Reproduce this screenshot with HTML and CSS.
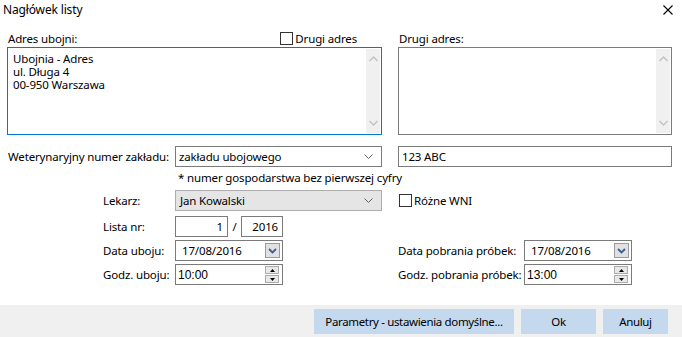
FILE: index.html
```html
<!DOCTYPE html>
<html lang="pl">
<head>
  <meta charset="UTF-8">
  <title>Nagłówek listy</title>
  <link rel="stylesheet" href="styles.css">
</head>
<body>
  <div class="dialog">
    <div class="titlebar">
      <span class="title">Nagłówek listy</span>
      <svg class="close" width="10" height="10" viewBox="0 0 10 10">
        <path d="M0.5 0.5 L9.5 9.5 M9.5 0.5 L0.5 9.5" stroke="#000" stroke-width="1.1" fill="none"/>
      </svg>
    </div>

    <div class="addresses">
      <div class="addr-col addr-main">
        <div class="addr-head">
          <span>Adres ubojni:</span>
          <span class="check-item"><span class="check"></span>Drugi adres</span>
        </div>
        <div class="memo focused">
          <div class="memo-text">
            <div>Ubojnia - Adres</div>
            <div>ul. Długa 4</div>
            <div>00-950 Warszawa</div>
          </div>
          <div class="vscroll">
            <svg width="9" height="6" viewBox="0 0 9 6"><path d="M0.5 5 L4.5 1 L8.5 5" stroke="#c2c2c2" stroke-width="1.4" fill="none"/></svg>
            <svg width="9" height="6" viewBox="0 0 9 6"><path d="M0.5 1 L4.5 5 L8.5 1" stroke="#c2c2c2" stroke-width="1.4" fill="none"/></svg>
          </div>
        </div>
      </div>
      <div class="addr-col addr-second">
        <div class="addr-head">
          <span>Drugi adres:</span>
        </div>
        <div class="memo">
          <div class="memo-text"></div>
          <div class="vscroll">
            <svg width="9" height="6" viewBox="0 0 9 6"><path d="M0.5 5 L4.5 1 L8.5 5" stroke="#c2c2c2" stroke-width="1.4" fill="none"/></svg>
            <svg width="9" height="6" viewBox="0 0 9 6"><path d="M0.5 1 L4.5 5 L8.5 1" stroke="#c2c2c2" stroke-width="1.4" fill="none"/></svg>
          </div>
        </div>
      </div>
    </div>

    <div class="form">
      <div class="row row-wni">
        <span class="lbl lbl-wide">Weterynaryjny numer zakładu:</span>
        <div class="combo combo-wide">
          <span>zakładu ubojowego</span>
          <svg class="chev" width="9" height="5" viewBox="0 0 9 5"><path d="M0.5 0.5 L4.5 4.5 L8.5 0.5" stroke="#606060" stroke-width="1" fill="none"/></svg>
        </div>
        <div class="edit edit-wni">123 ABC</div>
      </div>

      <div class="note">* numer gospodarstwa bez pierwszej cyfry</div>

      <div class="row row-lekarz">
        <span class="lbl">Lekarz:</span>
        <div class="combo combo-wide readonly">
          <span>Jan Kowalski</span>
          <svg class="chev" width="9" height="5" viewBox="0 0 9 5"><path d="M0.5 0.5 L4.5 4.5 L8.5 0.5" stroke="#606060" stroke-width="1" fill="none"/></svg>
        </div>
        <span class="check-item check-wni"><span class="check"></span>Różne WNI</span>
      </div>

      <div class="row row-lista">
        <span class="lbl">Lista nr:</span>
        <div class="edit num num-a">1</div>
        <span class="slash">/</span>
        <div class="edit num num-b">2016</div>
      </div>

      <div class="row row-dates">
        <div class="pair">
          <span class="lbl">Data uboju:</span>
          <div class="picker">
            <span>17/08/2016</span>
            <span class="drop-btn">
              <svg width="9" height="6" viewBox="0 0 9 6"><path d="M1 1 L4.5 4.5 L8 1" stroke="#3a5f94" stroke-width="1.8" fill="none"/></svg>
            </span>
          </div>
        </div>
        <div class="pair pair-right">
          <span class="lbl lbl-right">Data pobrania próbek:</span>
          <div class="picker">
            <span>17/08/2016</span>
            <span class="drop-btn">
              <svg width="9" height="6" viewBox="0 0 9 6"><path d="M1 1 L4.5 4.5 L8 1" stroke="#3a5f94" stroke-width="1.8" fill="none"/></svg>
            </span>
          </div>
        </div>
      </div>

      <div class="row row-times">
        <div class="pair">
          <span class="lbl">Godz. uboju:</span>
          <div class="picker time">
            <span>10:00</span>
            <span class="spin">
              <span class="spin-btn"><svg width="5" height="3" viewBox="0 0 5 3"><path d="M0 3 L2.5 0 L5 3 Z" fill="#000"/></svg></span>
              <span class="spin-btn"><svg width="5" height="3" viewBox="0 0 5 3"><path d="M0 0 L2.5 3 L5 0 Z" fill="#000"/></svg></span>
            </span>
          </div>
        </div>
        <div class="pair pair-right">
          <span class="lbl lbl-right">Godz. pobrania próbek:</span>
          <div class="picker time">
            <span>13:00</span>
            <span class="spin">
              <span class="spin-btn"><svg width="5" height="3" viewBox="0 0 5 3"><path d="M0 3 L2.5 0 L5 3 Z" fill="#000"/></svg></span>
              <span class="spin-btn"><svg width="5" height="3" viewBox="0 0 5 3"><path d="M0 0 L2.5 3 L5 0 Z" fill="#000"/></svg></span>
            </span>
          </div>
        </div>
      </div>
    </div>

    <div class="footer">
      <button class="btn btn-params">Parametry - ustawienia domyślne...</button>
      <button class="btn btn-ok">Ok</button>
      <button class="btn btn-cancel">Anuluj</button>
    </div>
  </div>
</body>
</html>
```

FILE: styles.css
```css
* {
  box-sizing: border-box;
}

body {
  margin: 0;
  background-color: #ffffff;
  font-family: 'Noto Sans', 'Open Sans', sans-serif;
  font-size: 11.5px;
  letter-spacing: -0.15px;
  color: #000;
}

.dialog {
  width: 682px;
  height: 337px;
  display: flex;
  flex-direction: column;
  overflow: hidden;
}

.titlebar {
  height: 30px;
  display: flex;
  justify-content: space-between;
  align-items: flex-start;
  padding: 1px 9px 0 3px;
  line-height: 18px;
  font-size: 12px;
}

.close {
  margin-top: 4px;
}

/* address memos */
.addresses {
  display: flex;
  padding-left: 7px;
  gap: 16px;
}

.addr-main {
  width: 375px;
}

.addr-second {
  width: 274px;
}

.addr-head {
  height: 17px;
  display: flex;
  justify-content: space-between;
  align-items: center;
  padding: 0 25px 0 1px;
  line-height: 16px;
}

.check-item {
  display: flex;
  align-items: center;
  gap: 2px;
}

.check {
  width: 13px;
  height: 13px;
  border: 1px solid #333;
  background: #fff;
}

.memo {
  height: 88px;
  border: 1px solid #7a7a7a;
  display: flex;
  justify-content: space-between;
  padding: 1px 1px 1px 0;
}

.memo.focused {
  border-color: #0078d7;
}

.memo-text {
  padding: 3px 0 0 5px;
}

.memo-text div {
  height: 13px;
  line-height: 13px;
}

.vscroll {
  width: 14px;
  background: #f0f0f0;
  display: flex;
  flex-direction: column;
  justify-content: space-between;
  align-items: center;
  padding: 7px 0 7px;
}

/* form rows */
.form {
  padding-top: 11px;
}

.row {
  display: flex;
  align-items: center;
  height: 21px;
}

.lbl {
  width: 72px;
  margin-left: 103px;
  white-space: nowrap;
}

.lbl-wide {
  width: 167px;
  margin-left: 8px;
}

.combo {
  height: 21px;
  border: 1px solid #7a7a7a;
  display: flex;
  align-items: center;
  justify-content: space-between;
  padding: 0 8px 0 3px;
  background: #fff;
}

.combo-wide {
  width: 207px;
}

.combo.readonly {
  background: #e5e5e5;
  border-color: #adadad;
  padding-left: 4px;
}

.edit {
  height: 21px;
  border: 1px solid #7a7a7a;
  display: flex;
  align-items: center;
  padding: 0 3px;
}

.edit-wni {
  width: 274px;
  margin-left: 16px;
}

.note {
  height: 23px;
  padding: 3px 0 0 178px;
}

.check-wni {
  margin-left: 17px;
}

.row-lista {
  margin-top: 5px;
}

.num {
  justify-content: flex-end;
  padding-right: 4px;
}

.num-a {
  width: 53px;
}

.num-b {
  width: 42px;
}

.slash {
  width: 13px;
  text-align: center;
}

.row-dates {
  margin-top: 3px;
}

.row-times {
  margin-top: 3px;
}

.pair {
  display: flex;
  align-items: center;
}

.pair-right {
  margin-left: 115px;
}

.lbl-right {
  margin-left: 0;
  width: 126px;
}

.picker {
  width: 108px;
  height: 21px;
  border: 1px solid #7a7a7a;
  display: flex;
  align-items: center;
  justify-content: space-between;
  padding: 0 2px 0 6px;
}

.drop-btn {
  width: 15px;
  height: 15px;
  background: #e1e1e1;
  border: 1px solid #9a9a9a;
  display: flex;
  align-items: center;
  justify-content: center;
}

.picker.time {
  padding-left: 2px;
  font-family: 'Liberation Sans', Arial, sans-serif;
  font-size: 12px;
  letter-spacing: 0;
}

.spin {
  display: flex;
  flex-direction: column;
  gap: 1px;
  padding-right: 1px;
}

.spin-btn {
  width: 14px;
  height: 8px;
  border: 1px solid #acacac;
  background: #e8e8e8;
  display: flex;
  align-items: center;
  justify-content: center;
}

/* footer buttons */
.footer {
  margin-top: auto;
  height: 32px;
  background: #f0f0f0;
  display: flex;
  justify-content: flex-end;
  align-items: flex-start;
  gap: 7px;
  padding: 4px 14px 0 0;
}

.btn {
  height: 25px;
  border: none;
  background: #c4d8ee;
  font-family: inherit;
  font-size: 11.5px;
  letter-spacing: -0.35px;
  color: #000;
  padding: 0;
}

.btn-params {
  width: 200px;
}

.btn-ok {
  width: 75px;
}

.btn-cancel {
  width: 65px;
}
```
